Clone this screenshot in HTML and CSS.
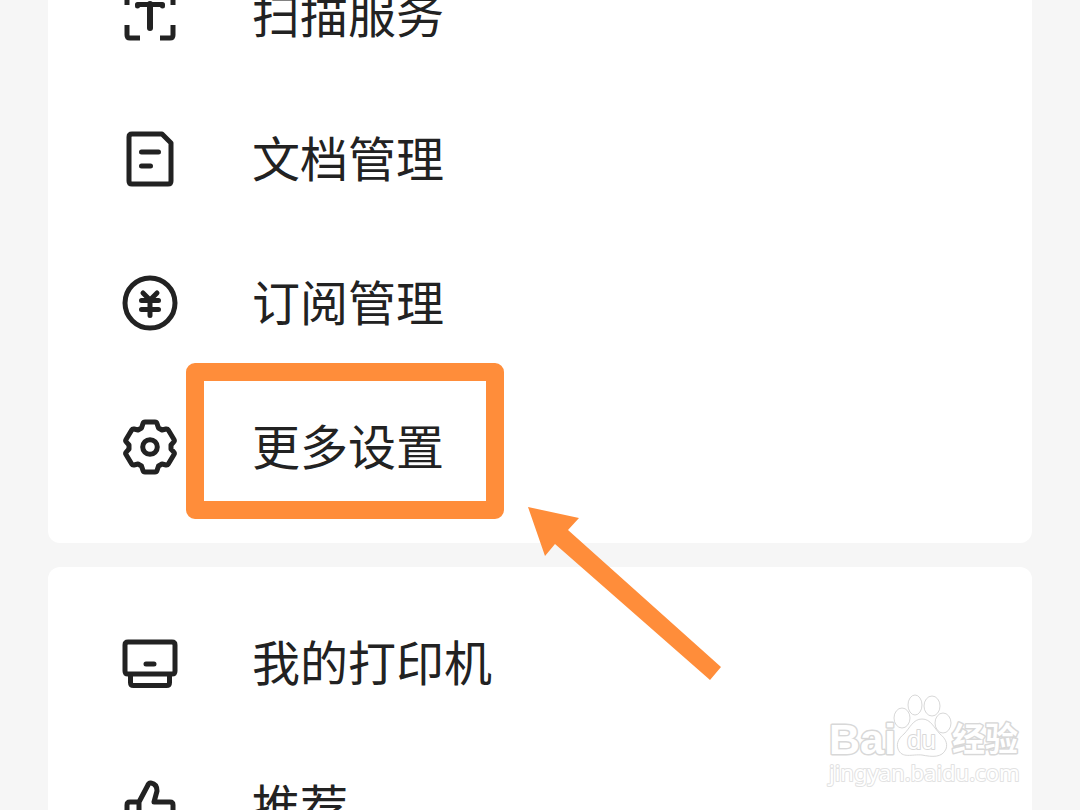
FILE: index.html
```html
<!DOCTYPE html>
<html lang="zh-CN">
<head>
<meta charset="utf-8">
<meta name="viewport" content="width=device-width, initial-scale=1">
<title>设置</title>
<link rel="stylesheet" href="styles.css">
</head>
<body>
<main class="screen">
  <nav class="card card-first">
    <a class="row" href="#scan">
      <svg class="icon" viewBox="0 0 60 60" aria-hidden="true"><path d="M7 20V10q0-3 3-3h10M40 7h10q3 0 3 3v10M7 40v10q0 3 3 3h10M40 53h10q3 0 3-3V40" stroke-linecap="butt"/><path d="M17.500 21v-1.500h25V21"/><path d="M30 19v24" stroke-width="6"/></svg>
      <span class="label">扫描服务</span>
    </a>
    <a class="row" href="#documents">
      <svg class="icon" viewBox="0 0 60 60" aria-hidden="true"><path d="M12 5h30l9 9v38q0 3-3 3H12q-3 0-3-3V8q0-3 3-3zM21.500 23h17M21.500 37h9"/></svg>
      <span class="label">文档管理</span>
    </a>
    <a class="row" href="#subscriptions">
      <svg class="icon" viewBox="0 0 60 60" aria-hidden="true"><circle cx="30" cy="30" r="25"/><path d="M23 20l7 7 7-7M21.500 27.500h17M21.500 36.500h17M30 27v15.500"/></svg>
      <span class="label">订阅管理</span>
    </a>
    <a class="row" href="#settings">
      <svg class="icon" viewBox="0 0 60 60" aria-hidden="true"><path d="M25 5h10q1.500 0 2 1.500L38.500 11l3.500 2 4-1q1.500-.3 2.300 1L54 22.500q.8 1.300-.2 2.400L51 28v4l2.800 3.100q1 1.100.2 2.400L48.300 47q-.8 1.300-2.300 1l-4-1-3.500 2-1.500 4.500Q36.500 55 35 55H25q-1.500 0-2-1.500L21.500 49 18 47l-4 1q-1.500.3-2.300-1L6 37.500q-.8-1.300.2-2.400L9 32v-4l-2.800-3.100q-1-1.100-.2-2.400L11.700 13q.8-1.300 2.300-1l4 1 3.500-2L23 6.500Q23.500 5 25 5z"/><circle cx="30" cy="30" r="7.300"/></svg>
      <span class="label">更多设置</span>
      <i class="highlight"></i>
      <svg class="arrow" viewBox="0 0 194 174" aria-hidden="true"><path d="M0 0l51 11-11 12 153 137-11 13L27 37 17 49z"/></svg>
    </a>
  </nav>
  <nav class="card">
    <a class="row" href="#printers">
      <svg class="icon" viewBox="0 0 60 60" aria-hidden="true"><path d="M8 9h44q3 0 3 3v26q0 3-3 3H8q-3 0-3-3V12q0-3 3-3zM10.500 41v8.500q0 3 3 3h33q3 0 3-3V41M26 31h8"/></svg>
      <span class="label">我的打印机</span>
    </a>
    <a class="row" href="#recommend">
      <svg class="icon" viewBox="0 0 60 60" aria-hidden="true"><path d="M19 25h-9q-3 0-3 3v22q0 3 3 3h40q3 0 3-3V28q0-3-3-3H34l3-11q0-7-6-8-2-.5-3 2L19 25v28"/></svg>
      <span class="label">推荐</span>
    </a>
  </nav>
  <svg class="watermark" viewBox="0 0 210 105" role="img" aria-label="Baidu 经验">
    <text class="brand" x="9" y="64">Bai</text>
    <ellipse cx="82" cy="28" rx="8" ry="10"/>
    <ellipse cx="95" cy="15" rx="7" ry="10"/>
    <ellipse cx="112" cy="16" rx="8" ry="10"/>
    <ellipse cx="123" cy="33" rx="8" ry="10"/>
    <path d="M102 29c-9 0-12 9-18 15-5 4-8 9-6 15 4 10 14 5 24 6 10 2 20 3 24-6 2-6-1-11-6-15-6-6-9-15-18-15z"/>
    <text class="brand-small" x="87" y="59">du</text>
    <text class="brand-cn" x="132" y="61">经验</text>
    <text class="site" x="9" y="91">jingyan.baidu.com</text>
  </svg>
</main>
</body>
</html>
```
FILE: styles.css
```css
* {
  box-sizing: border-box;
}

body {
  margin: 0;
  background: #f6f6f6;
  color: #222;
  font-family: "Noto Sans CJK SC", sans-serif;
}

.screen {
  position: relative;
  display: flex;
  flex-direction: column;
  gap: 24px;
  height: 100vh;
  padding: 0 48px;
  overflow: hidden;
}

.card {
  flex: none;
  padding: 24px 0;
  border-radius: 12px;
  background: #fff;
}

/* The list is scrolled part of the way down. */
.card-first {
  margin-top: -81px;
}

.row {
  position: relative;
  display: flex;
  align-items: center;
  gap: 72px;
  height: 144px;
  padding: 0 72px;
  color: inherit;
  font-size: 48px;
  line-height: 72px;
  text-decoration: none;
}

.label {
  padding-bottom: 6px;
}

.icon {
  flex: none;
  width: 60px;
  height: 60px;
  fill: none;
  stroke: #222;
  stroke-width: 5;
  stroke-linecap: round;
  stroke-linejoin: round;
}

.highlight {
  position: absolute;
  top: -12px;
  left: 138px;
  width: 318px;
  height: 156px;
  border: 18px solid #ff8d3a;
  border-radius: 9px;
}

.arrow {
  position: absolute;
  z-index: 1;
  top: 132px;
  left: 480px;
  width: 194px;
  height: 174px;
  fill: #ff8d3a;
}

.watermark {
  position: absolute;
  right: 50px;
  bottom: 15px;
  width: 210px;
  height: 105px;
  fill: #fff;
  stroke: #d8d8d8;
  stroke-width: 1;
  font-family: "Liberation Sans", sans-serif;
}

.watermark text {
  stroke-width: 3;
  stroke-linejoin: round;
  paint-order: stroke;
}

.brand {
  font-size: 43px;
  font-weight: 700;
}

.watermark .brand-small {
  font-size: 26px;
  stroke-width: 2;
}

.brand-cn {
  font-family: "Noto Sans CJK SC", sans-serif;
  font-size: 33px;
  font-weight: 700;
}

.watermark .site {
  font-family: "Noto Sans", sans-serif;
  font-size: 22px;
  stroke: #e2e2e2;
  stroke-width: 2;
}
```
